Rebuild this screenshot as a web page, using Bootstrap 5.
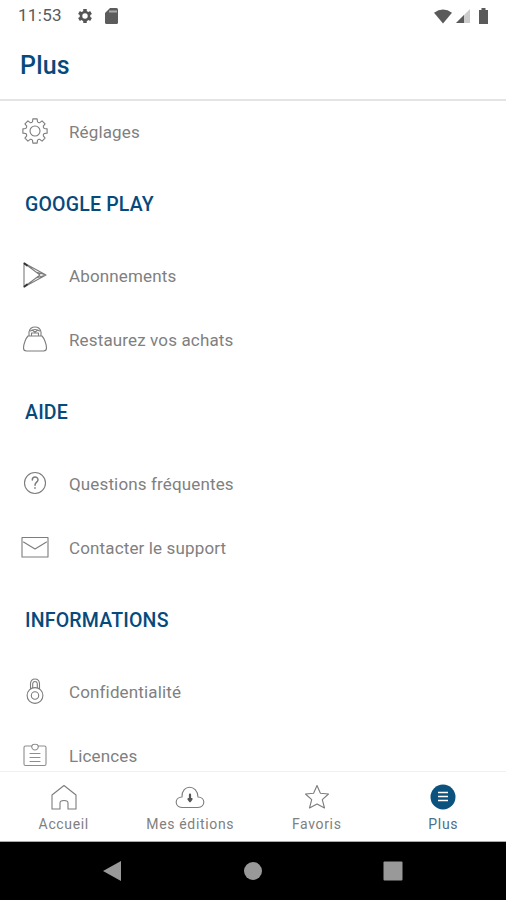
<!DOCTYPE html>
<html lang="fr">
<head>
<meta charset="utf-8">
<meta name="viewport" content="width=device-width, initial-scale=1">
<title>Plus</title>
<link rel="stylesheet" href="https://cdn.jsdelivr.net/npm/bootstrap@5.3.0/dist/css/bootstrap.min.css">
<style>
:root{--navy:#064a7c;--ink:#808080}
body{font-family:Roboto,sans-serif;color:var(--ink)}
svg{display:block;flex:none;overflow:visible}
.line{fill:none;stroke:#7c7c7c;stroke-width:1.1;stroke-linejoin:round;stroke-linecap:round}
.status-bar{height:32px;padding:0 14px 0 18px;color:#5a5a5a;font-size:17px;letter-spacing:.3px}
.card-icon{margin-left:13px}
.battery-icon{margin-left:9px}
.title-bar{height:69px;padding:0 0 1px 20px;border-bottom:2px solid #e4e4e4}
.title-bar h1{font-size:25px;letter-spacing:.2px;font-weight:500;color:var(--navy);line-height:1}
.entry{height:64px;padding-left:21px;font-size:17px;letter-spacing:.14px}
.entry svg{width:28px;height:28px;margin:-2px 20px 0 0}
.entry span{padding-top:1px}
.heading{height:80px;padding:1px 0 0 25px;margin:0;font-size:19.5px;letter-spacing:.2px;font-weight:500;color:var(--navy)}
.settings{margin-top:-1px}
.tabs{height:71px;border-top:1px solid #f0f0f0;border-bottom:1px solid #aaa;font-size:14px;letter-spacing:.65px;line-height:16px}
.tabs a{color:var(--ink);padding:11px 0 0 1px}
.tabs svg{width:28px;height:28px;margin-bottom:5px}
.tabs a.current{color:#4b7089}
.system-nav{height:58px;padding:0 103px 0 102px}
</style>
<script src="https://cdn.jsdelivr.net/npm/bootstrap@5.3.0/dist/js/bootstrap.bundle.min.js"></script>
</head>
<body class="vh-100 d-flex flex-column overflow-hidden bg-white">
<header class="flex-shrink-0">
  <div class="status-bar d-flex align-items-center">
    <span>11:53</span>
    <svg class="ms-3" width="14" height="14" viewBox="-8 -8 16 16"><circle r="4.600" fill="none" stroke="#555" stroke-width="3"/><g stroke="#555" stroke-width="4"><path d="M0-8V-4M0 8V4M-6.900-4-4-2.300M6.900-4 4-2.300M-6.900 4-4 2.300M6.900 4 4 2.300"/></g></svg>
    <svg class="card-icon" width="13" height="16" viewBox="0 0 13 16"><path d="M5 0h6.500Q13 0 13 1.500v13q0 1.500-1.500 1.500h-10Q0 16 0 14.500V5z" fill="#5c5c5c"/><path d="M4 3.500H12" stroke="#aaa" stroke-width="2"/></svg>
    <svg class="ms-auto" width="18" height="15" viewBox="0 0 19 15"><path d="M0 3.500Q9.500-3.500 19 3.500L9.500 15z" fill="#5a5a5a"/></svg>
    <svg class="ms-1" width="14" height="14" viewBox="0 0 14 14"><path d="M14 0v14H0z" fill="#ccc"/><path d="M8 6v8H0z" fill="#5a5a5a"/></svg>
    <svg class="battery-icon me-1" width="9" height="16" viewBox="0 0 9 16"><path d="M2.500 0h4v2H9v14H0V2h2.500z" fill="#5a5a5a"/></svg>
  </div>
  <div class="title-bar d-flex align-items-center"><h1 class="m-0">Plus</h1></div>
</header>
<main class="settings flex-grow-1 overflow-hidden">
  <div class="entry d-flex align-items-center">
    <svg viewBox="-14 -14 28 28" class="line"><path d="M9.270-2.480 12.110-2.140V2.140L9.270 2.480Q8 3.500 8.310 4.800L10.080 7.060 7.060 10.080 4.800 8.310Q3.500 8 2.480 9.270L2.140 12.110H-2.140L-2.480 9.270Q-3.500 8-4.800 8.310L-7.060 10.080-10.080 7.060-8.310 4.800Q-8 3.500-9.270 2.480L-12.110 2.140V-2.140L-9.270-2.480Q-8-3.500-8.310-4.800L-10.080-7.060-7.060-10.080-4.800-8.310Q-3.500-8-2.480-9.270L-2.140-12.110H2.140L2.480-9.270Q3.500-8 4.800-8.310L7.060-10.080 10.080-7.060 8.310-4.800Q8-3.500 9.270-2.480Z"/><circle r="5"/></svg>
    <span>Réglages</span>
  </div>
  <h2 class="heading d-flex align-items-center">GOOGLE PLAY</h2>
  <div class="entry d-flex align-items-center">
    <svg viewBox="0 0 28 28" class="line"><path d="M3 2V26L25 14ZM3 2 19 14 3 26M3 2 15 11 25 14 15 17 3 26"/><path d="M3.500 2.500 6 4.500M3.500 25.500 6 23.500" stroke="#333" stroke-width="1.800"/></svg>
    <span>Abonnements</span>
  </div>
  <div class="entry d-flex align-items-center">
    <svg viewBox="0 0 28 28" class="line"><path d="M7 11H21C23 13 25.500 19 25.500 23Q25.500 26 22.500 26H5.500Q2.500 26 2.500 23C2.500 19 5 13 7 11ZM8 11V7Q9 2 14 2T20 7V11M10.500 10V8H17.500V10M9.500 6Q14 3 18.500 6M11 5 14 7 17 5"/></svg>
    <span>Restaurez vos achats</span>
  </div>
  <h2 class="heading d-flex align-items-center">AIDE</h2>
  <div class="entry d-flex align-items-center">
    <svg viewBox="0 0 28 28" class="line"><circle cx="14" cy="14" r="10.500"/><path d="M11.300 11C11.300 7 17 7.200 17 10.700 17 13.200 14 13.200 14 16.300M14 18.800V19.200" stroke-width="1.500"/></svg>
    <span>Questions fréquentes</span>
  </div>
  <div class="entry d-flex align-items-center">
    <svg viewBox="0 0 28 28" class="line"><path d="M1 4.500H27V24H1ZM2.500 9 14 16 25.500 9"/></svg>
    <span>Contacter le support</span>
  </div>
  <h2 class="heading d-flex align-items-center">INFORMATIONS</h2>
  <div class="entry d-flex align-items-center">
    <svg viewBox="0 0 28 28" class="line"><circle cx="14" cy="18.500" r="7.900"/><circle cx="14" cy="18.500" r="3.700"/><path d="M9.500 11.500V6.500Q10 2 14 2T18.500 6.500V11.500M11.700 10.500V6.500Q12 4.500 14 4.500T16.300 6.500V10.500"/></svg>
    <span>Confidentialité</span>
  </div>
  <div class="entry d-flex align-items-center">
    <svg viewBox="0 0 28 28" class="line"><path d="M10.500 5H4.500Q3 5 3 6.500V23Q3 24.500 4.500 24.500H23.500Q25 24.500 25 23V6.500Q25 5 23.500 5H17.500M10.500 5H11Q11 3.200 14 3.200T17 5H17.500Q17 9 14 9T10.500 5ZM9 12.500H19M9 16.500H19M9 20.500H19" stroke="#8d8d8d"/></svg>
    <span>Licences</span>
  </div>
</main>
<nav class="tabs d-flex flex-shrink-0 bg-white text-center">
  <a class="col-3 d-flex flex-column align-items-center text-decoration-none" href="#"><svg viewBox="0 0 28 28" class="line"><path d="M2 12 14 2.500 26 12V26H18V20Q18 17.500 14 17.500T10 20V26H2Z"/></svg>Accueil</a>
  <a class="col-3 d-flex flex-column align-items-center text-decoration-none" href="#"><svg viewBox="0 0 28 28" class="line"><path d="M6 24.500C-2 24-1.500 14 6 14 5.500 1 21.500 1 22 14 29.500 14 30 24 22 24.500Z"/><path d="M14 11.500V18M12.500 16 14 18 15.500 16Z" stroke="#555" stroke-width="2.200"/></svg>Mes éditions</a>
  <a class="col-3 d-flex flex-column align-items-center text-decoration-none" href="#"><svg viewBox="0 0 28 28" class="line"><path d="M14 2.500 17.400 10.200 25.500 11 19.300 16.700 21.500 25 14 21 6.500 25 8.700 16.700 2.500 11 10.600 10.200Z"/></svg>Favoris</a>
  <a class="col-3 d-flex flex-column align-items-center text-decoration-none current" href="#"><svg viewBox="0 0 28 28"><circle cx="14" cy="14" r="12.500" fill="#0b527f"/><path d="M9 9.500H19M9 13.500H19M9 17.500H19" stroke="#fff" stroke-width="1.500"/></svg>Plus</a>
</nav>
<footer class="system-nav bg-black d-flex flex-shrink-0 align-items-center justify-content-between">
  <svg width="20" height="22" viewBox="0 0 20 22"><path d="M19 1V21L1 11Z" fill="#999"/></svg>
  <svg width="18" height="18" viewBox="0 0 18 18"><circle cx="9" cy="9" r="9" fill="#999"/></svg>
  <svg width="20" height="20" viewBox="0 0 20 20"><rect width="19" height="19" rx="1" x=".5" y=".5" fill="#999"/></svg>
</footer>
</body>
</html>
